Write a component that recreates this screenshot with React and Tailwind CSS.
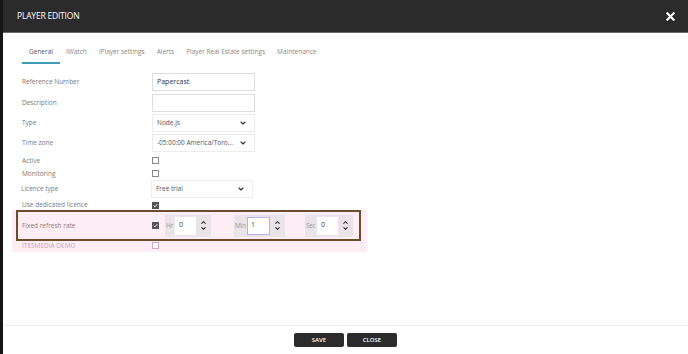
import React from 'react';
import { ChevronDown, ChevronUp } from 'lucide-react';

const Check = ({ checked, pink }) => (
  <span
    className={`inline-flex items-center justify-center w-[7px] h-[7px] border ${
      checked ? 'bg-[#555] border-[#555]' : pink ? 'bg-white border-[#d9a6c2]' : 'bg-white border-[#888]'
    }`}
  >
    {checked && (
      <svg width="5" height="5" viewBox="0 0 10 10">
        <path d="M1.5 5.2 L4 7.6 L8.6 2.4" stroke="#fff" strokeWidth="2" fill="none" />
      </svg>
    )}
  </span>
);

const Row = ({ label, h = 'h-[18px]', mt = 'mt-0', children, labelClass = 'text-[#7a7a7a]' }) => (
  <div className={`flex items-center ${h} ${mt}`}>
    <div className={`w-[130px] text-[6.5px] ${labelClass}`}>{label}</div>
    <div className="flex items-center">{children}</div>
  </div>
);

const Select = ({ value, w = 'w-[103px]' }) => (
  <div className={`${w} h-[18px] border border-[#ececec] flex items-center justify-between pl-[4px] pr-[7px] text-[6.5px] text-[#555]`}>
    <span>{value}</span>
    <ChevronDown size={8} strokeWidth={3.5} color="#333" />
  </div>
);

const Spin = () => (
  <div className="flex flex-col items-center justify-center w-[15px] -space-y-[1px]">
    <ChevronUp size={7} strokeWidth={3.5} color="#333" />
    <ChevronDown size={7} strokeWidth={3.5} color="#333" />
  </div>
);

const TimeBox = ({ label, value, labelW, inputW, focus }) => (
  <div className="flex items-center h-[22px] bg-[#eae4e8]">
    <span className={`${labelW} text-[6.5px] text-[#999] pl-[1px] tracking-[-0.3px]`}>{label}</span>
    <div
      className={`${inputW} h-[18px] bg-white flex items-center pl-[3px] text-[7px] text-[#444] border ${
        focus ? 'border-[#b7b2e6]' : 'border-white'
      }`}
    >
      {value}
    </div>
    <Spin />
  </div>
);

export default function App() {
  const tabs = ['General', 'IWatch', 'IPlayer settings', 'Alerts', 'Player Real Estate settings', 'Maintenance'];

  return (
    <div className="w-[688px] h-[354px] bg-[#161616] pl-[3px] font-['Open_Sans',sans-serif] overflow-hidden">
      <div className="h-full bg-white flex flex-col">
        <div className="h-[33px] bg-[#2b2b2b] border-b border-[#6a6a6a] flex items-center justify-between pl-[14px] pr-[13px]">
          <span className="text-white text-[8.5px] tracking-[-0.2px]">PLAYER EDITION</span>
          <svg width="9" height="9" viewBox="0 0 10 10">
            <path d="M1.5 1.5 L8.5 8.5 M8.5 1.5 L1.5 8.5" stroke="#fff" strokeWidth="2.4" strokeLinecap="square" />
          </svg>
        </div>

        <div className="flex pl-[19px] pt-[14px]">
          {tabs.map((t, i) => (
            <div
              key={t}
              className={`pb-[5px] text-[6.5px] leading-[10px] ${
                i === 0 ? 'border-b-2 border-[#3f9cb4] text-[#555] px-[7px]' : 'border-b-2 border-transparent text-[#888] px-[6px]'
              }`}
            >
              {t}
            </div>
          ))}
        </div>

        <div className="flex flex-col pl-[19px] mt-[9px]">
          <Row label="Reference Number">
            <div className="w-[103px] h-[18px] border border-[#dcdcdc] flex items-center pl-[4px] text-[7px] text-[#333]">Papercast</div>
          </Row>
          <Row label="Description" mt="mt-[3px]">
            <div className="w-[103px] h-[18px] border border-[#dcdcdc]" />
          </Row>
          <Row label="Type" mt="mt-[2px]">
            <Select value="Node.js" />
          </Row>
          <Row label="Time zone" mt="mt-[2px]">
            <Select value="-05:00:00 America/Toro..." />
          </Row>
          <Row label="Active" h="h-[13px]" mt="mt-[2px]">
            <Check />
          </Row>
          <Row label="Monitoring" h="h-[13px]">
            <Check />
          </Row>
          <div className="-ml-[1px]">
            <Row label="Licence type" h="h-[18px]">
              <Select value="Free trial" w="w-[102px]" />
            </Row>
          </div>
          <Row label="Use dedicated licence" h="h-[12px]" mt="mt-[1px]">
            <Check checked />
          </Row>

          <div className="-ml-[10px] -mt-[1px] w-[355px] bg-[#fdeef6] pl-[4px] pb-[2px]">
            <div className="w-[345px] h-[31px] border-2 border-[#6e4b2c] pl-[4px] flex items-center">
              <div className="w-[130px] text-[6.5px] text-[#8a7a80]">Fixed refresh rate</div>
              <Check checked />
              <div className="flex items-center ml-[6px]">
                <TimeBox label="Hr" value="0" labelW="w-[10px]" inputW="w-[21px]" />
                <div className="w-[23px]" />
                <TimeBox label="Min" value="1" labelW="w-[13px]" inputW="w-[23px]" focus />
                <div className="w-[20px]" />
                <TimeBox label="Sec" value="0" labelW="w-[12px]" inputW="w-[21px]" />
              </div>
            </div>
            <div className="flex items-center h-[9px] pl-[6px]">
              <div className="w-[130px] text-[6.5px] text-[#c99fb5]">ITESMEDIA DEMO</div>
              <Check pink />
            </div>
          </div>
        </div>

        <div className="flex-1" />

        <div className="h-[29px] border-t border-[#ececec] flex justify-center gap-[3px] pt-[7px]">
          <button className="w-[50px] h-[14px] bg-[#2b2b2b] rounded-[2px] text-white text-[6px] font-semibold">SAVE</button>
          <button className="w-[50px] h-[14px] bg-[#2b2b2b] rounded-[2px] text-white text-[6px] font-semibold">CLOSE</button>
        </div>
      </div>
    </div>
  );
}
